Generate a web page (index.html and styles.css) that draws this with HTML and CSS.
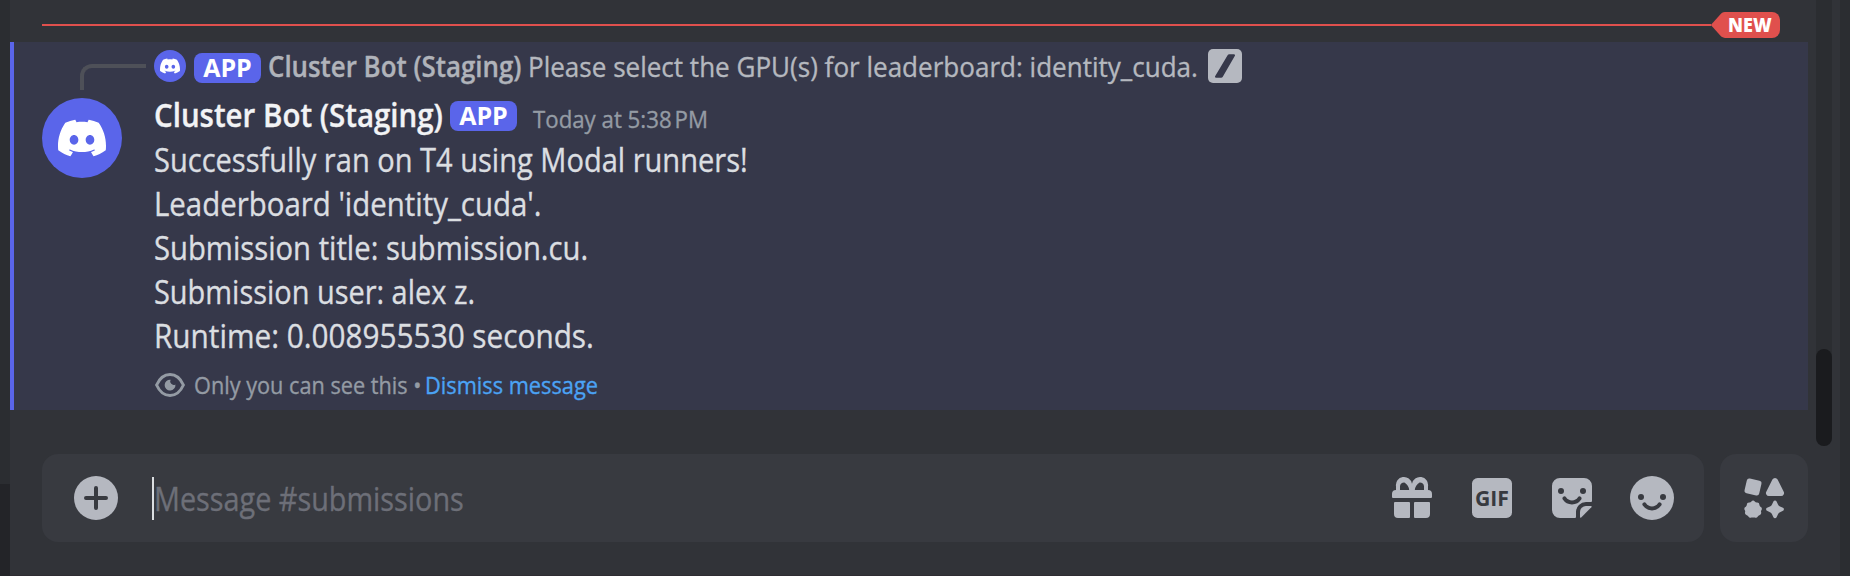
FILE: index.html
```html
<!DOCTYPE html>
<html lang="en">
<head>
<meta charset="utf-8">
<title>submissions</title>
<link rel="stylesheet" href="styles.css">
</head>
<body>
<svg class="defs" aria-hidden="true">
  <symbol id="logo" viewBox="0 0 24 24"><path d="M20.317 4.3698a19.7913 19.7913 0 00-4.8851-1.5152.0741.0741 0 00-.0785.0371c-.211.3753-.4447.8648-.6083 1.2495-1.8447-.2762-3.68-.2762-5.4868 0-.1636-.3933-.4058-.8742-.6177-1.2495a.077.077 0 00-.0785-.037 19.7363 19.7363 0 00-4.8852 1.515.0699.0699 0 00-.0321.0277C.5334 9.0458-.319 13.5799.0992 18.0578a.0824.0824 0 00.0312.0561c2.0528 1.5076 4.0413 2.4228 5.9929 3.0294a.0777.0777 0 00.0842-.0276c.4616-.6304.8731-1.2952 1.226-1.9942a.076.076 0 00-.0416-.1057c-.6528-.2476-1.2743-.5495-1.8722-.8923a.077.077 0 01-.0076-.1277c.1258-.0943.2517-.1923.3718-.2914a.0743.0743 0 01.0776-.0105c3.9278 1.7933 8.18 1.7933 12.0614 0a.0739.0739 0 01.0785.0095c.1202.099.246.1981.3728.2924a.077.077 0 01-.0066.1276 12.2986 12.2986 0 01-1.873.8914.0766.0766 0 00-.0407.1067c.3604.698.7719 1.3628 1.225 1.9932a.076.076 0 00.0842.0286c1.961-.6067 3.9495-1.5219 6.0023-3.0294a.077.077 0 00.0313-.0552c.5004-5.177-.8382-9.6739-3.5485-13.6604a.061.061 0 00-.0312-.0286zM8.02 15.3312c-1.1825 0-2.1569-1.0857-2.1569-2.419 0-1.3332.9555-2.4189 2.157-2.4189 1.2108 0 2.1757 1.0952 2.1568 2.419 0 1.3332-.9555 2.4189-2.1569 2.4189zm7.9748 0c-1.1825 0-2.1569-1.0857-2.1569-2.419 0-1.3332.9554-2.4189 2.1569-2.4189 1.2108 0 2.1757 1.0952 2.1568 2.419 0 1.3332-.946 2.4189-2.1568 2.4189Z"/></symbol>
</svg>
<div class="app">
  <div class="rail"><div class="rail-top"></div><div class="rail-user"></div></div>
  <main class="main">
    <div class="chat">
      <div class="feed">
        <div class="divider">
          <span class="divider-line"></span>
          <span class="new"><svg class="new-tip" viewBox="0 0 14 26"><path d="M14.500 0C11.500 .2 10.500 1.200 9.500 2.200L.3 12.400a1 1 0 0 0 0 1.200l9.200 10.200c1 1 2 2 5 2.200Z"/></svg><span class="new-body"><b class="new-text">NEW</b></span></span>
        </div>
        <article class="message">
          <div class="reply">
            <span class="spine"></span>
            <span class="mini-avatar"><svg class="mini-logo"><use href="#logo"/></svg></span>
            <span class="badge"><span class="badge-text">APP</span></span>
            <span class="reply-name"><span class="t">Cluster Bot (Staging)</span></span>
            <span class="reply-text"><span class="t">Please select the GPU(s) for leaderboard: identity_cuda.</span></span>
            <svg class="slash" viewBox="0 0 34 34"><rect class="fill" width="34" height="34" rx="5"/><path class="slash-mark" d="M19.600 6.200a2 2 0 0 1 1.700-1H26a1 1 0 0 1 .9 1.500L14.800 27.800a2 2 0 0 1-1.700 1H8a1 1 0 0 1-.9-1.500Z"/></svg>
          </div>
          <div class="body">
            <span class="avatar"><svg class="avatar-logo"><use href="#logo"/></svg></span>
            <div class="content">
              <header class="head">
                <span class="name"><span class="t">Cluster Bot (Staging)</span></span>
                <span class="badge"><span class="badge-text">APP</span></span>
                <time class="time"><span class="t">Today at 5:38&#8239;PM</span></time>
              </header>
              <p class="line l1"><span class="t">Successfully ran on T4 using Modal runners!</span></p>
              <p class="line l2"><span class="t">Leaderboard 'identity_cuda'.</span></p>
              <p class="line l3"><span class="t">Submission title: submission.cu.</span></p>
              <p class="line l4"><span class="t">Submission user: alex z.</span></p>
              <p class="line l5"><span class="t">Runtime: 0.008955530 seconds.</span></p>
              <footer class="note">
                <svg class="eye" viewBox="0 0 32 28"><path class="eye-outline" d="M2.600 14C5.500 7.500 10.200 3.500 16 3.500S26.500 7.500 29.400 14C26.500 20.500 21.800 24.500 16 24.500S5.500 20.500 2.600 14Z"/><path class="eye-pupil" d="M16.600 8.700a3.500 3.500 0 0 0 4.800 4.700A5.400 5.400 0 1 1 16.600 8.700Z"/></svg>
                <span class="note-text"><span class="t">Only you can see this •</span></span>
                <a class="dismiss"><span class="t">Dismiss message</span></a>
              </footer>
            </div>
          </div>
        </article>
      </div>
      <div class="track"><div class="thumb"></div></div>
    </div>
    <div class="composer">
      <div class="input">
        <svg class="plus" viewBox="0 0 44 44"><circle class="fill" cx="22" cy="22" r="22"/><path class="cut" d="M22 12v20M12 22h20"/></svg>
        <span class="caret"></span><span class="placeholder"><span class="t">Message #submissions</span></span>
        <div class="tools">
          <svg class="icon" viewBox="0 0 24 24"><path class="fill" fill-rule="evenodd" d="M4 6.200a4 4 0 0 1 8-1.300 4 4 0 0 1 8 1.300V8H4Zm2 .1V8h4.600A5 5 0 0 0 8.200 4.200 2.050 2.050 0 0 0 6 6.300ZM13.400 8H18V6.300a2.050 2.050 0 0 0-2.200-2.100A5 5 0 0 0 13.400 8ZM4 8h16a2 2 0 0 1 2 2v1.500a.5.5 0 0 1-.5.500h-19a.5.5 0 0 1-.5-.5V10a2 2 0 0 1 2-2ZM3.500 14h7a.5.5 0 0 1 .5.500V21.500a.5.5 0 0 1-.5.500H5a2 2 0 0 1-2-2V14.500a.5.5 0 0 1 .5-.5ZM13.500 14h7a.5.5 0 0 1 .5.500V20a2 2 0 0 1-2 2h-5.500a.5.5 0 0 1-.5-.5V14.500a.5.5 0 0 1 .5-.5Z"/></svg>
          <svg class="icon" viewBox="0 0 24 24"><rect class="fill" x="2" y="2" width="20" height="20" rx="2.800"/><text class="gif" x="3.500" y="15.900" textLength="17" lengthAdjust="spacingAndGlyphs">GIF</text></svg>
          <svg class="icon" viewBox="0 0 24 24"><path class="fill" d="M6 2h12a4 4 0 0 1 4 4v7.500a.5.5 0 0 1-.5.500H19a5 5 0 0 0-5 5v2.500a.5.5 0 0 1-.5.500H6a4 4 0 0 1-4-4V6a4 4 0 0 1 4-4Z"/><path class="fill" d="M16 21.500V19a3 3 0 0 1 3-3h2.500q.6.100.2.600L16.600 21.700q-.5.400-.6-.2Z"/><circle class="dot" cx="6.500" cy="8.500" r="1.500"/><circle class="dot" cx="17.500" cy="8.500" r="1.500"/><path class="cut" d="M8.200 12.200a4.600 4.600 0 0 0 7.600 0"/></svg>
          <svg class="icon" viewBox="0 0 24 24"><circle class="fill" cx="12" cy="12" r="11"/><circle class="dot" cx="6.500" cy="11.500" r="1.500"/><circle class="dot" cx="17.500" cy="11.500" r="1.500"/><path class="cut" d="M8.200 15.200a4.600 4.600 0 0 0 7.600 0"/></svg>
        </div>
      </div>
      <div class="apps">
        <svg class="icon" viewBox="0 0 24 24"><rect class="fill" x="2.750" y="2.750" width="7.500" height="7.500" rx="1.300" transform="rotate(13 6.500 6.500)"/><path class="fill" d="M16.200 2.700a1.500 1.500 0 0 1 2.600 0l3 6a1.500 1.500 0 0 1-1.300 2.300h-6a1.500 1.500 0 0 1-1.300-2.300Z"/><path class="fill" d="M5.700 13.700a1.200 1.200 0 0 1 1.700 0 1.200 1.200 0 0 0 1 .5 1.200 1.200 0 0 1 1.300 1.200 1.200 1.200 0 0 0 .5 1 1.200 1.200 0 0 1 .5 1.700 1.200 1.200 0 0 0-.1 1.100 1.200 1.200 0 0 1-.9 1.400 1.200 1.200 0 0 0-.8.600 1.200 1.200 0 0 1-1.500.6h-1.700a1.200 1.200 0 0 1-1.500-.6 1.200 1.200 0 0 0-.8-.6 1.200 1.200 0 0 1-.9-1.400 1.200 1.200 0 0 0-.1-1.100 1.200 1.200 0 0 1 .5-1.700 1.200 1.200 0 0 0 .5-1 1.200 1.200 0 0 1 1.300-1.200 1.200 1.200 0 0 0 1-.5Z"/><path class="fill" d="M16.700 13.700a.9.9 0 0 1 1.600 0l.7 1.600a2 2 0 0 0 1 1l1.500.600a.85.85 0 0 1 0 1.500l-1.500.700a2 2 0 0 0-1 1l-.7 1.500a.9.9 0 0 1-1.600 0l-.7-1.500a2 2 0 0 0-1-1l-1.500-.7a.85.85 0 0 1 0-1.500l1.500-.6a2 2 0 0 0 1-1Z"/></svg>
      </div>
    </div>
  </main>
  <div class="members"></div>
</div>
</body>
</html>
```
FILE: styles.css
```css
* { box-sizing: border-box; }
body { margin: 0; background: #313338; font-family: "Open Sans", "Noto Sans", sans-serif; font-size: 32px; color: #dbdee1; overflow: hidden; }
.defs { position: absolute; width: 0; height: 0; }
.app { display: flex; width: 1850px; height: 576px; }
.rail { width: 10px; display: flex; flex-direction: column; }
.rail-top { height: 484px; background: #2b2d31; }
.rail-user { flex: 1; background: #232428; }
.members { width: 10px; background: #2b2d31; }
.main { flex: 1; display: flex; flex-direction: column; border-bottom: 1px solid #2e2c32; }
.chat { display: flex; gap: 8px; height: 446px; }
.feed { width: 1798px; }
.track { width: 16px; background: #2b2d31; border-radius: 0 0 8px 8px; display: flex; align-items: flex-end; }
.thumb { width: 16px; height: 97px; border-radius: 8px; background: #1a1b1e; }

/* condensed text setting */
.t { display: inline-block; transform-origin: 0 50%; white-space: nowrap; -webkit-text-stroke: .35px currentColor; }

.divider { display: flex; align-items: center; height: 42px; padding: 8px 28px 0 32px; }
.divider-line { flex: 1; height: 2px; background: #e0504d; }
.new { display: flex; height: 26px; }
.new-tip { width: 14px; height: 26px; fill: #e0504d; }
.new-body { width: 55px; padding-left: 2.500px; background: #e0504d; border-radius: 0 8px 8px 0; }
.new-text { display: block; transform: scaleX(.9); transform-origin: 0 50%; color: #fff; font-size: 20px; line-height: 25px; font-weight: 800; }

.message { height: 368px; padding: 7px 0 0 28px; border-left: 4px solid #5a65ea; background: #36384a; }
.reply { display: flex; align-items: center; height: 34px; white-space: nowrap; font-size: 28px; line-height: 34px; }
.spine { align-self: flex-end; width: 66px; height: 26px; margin: 0 8px -7px 38px; border: 4px solid #4e5058; border-width: 4px 0 0 4px; border-top-left-radius: 12px; }
.mini-avatar { display: grid; place-items: center; width: 32px; height: 32px; border-radius: 50%; background: #5a65ea; }
.mini-logo { width: 20px; height: 20px; fill: #fff; }
.badge { display: flex; justify-content: center; width: 67px; height: 30px; border-radius: 8px; background: #5a65ea; color: #fff; }
.badge-text { font-size: 25px; font-weight: 700; line-height: 29px; }
.reply .badge { margin: 4px 7px 0 8px; }
.reply-name { width: 260px; color: #b0b3ba; font-weight: 600; }
.reply-name .t { transform: scaleX(.9235); }
.reply-text { width: 680px; color: #b5b8bf; }
.reply-text .t { transform: scaleX(.930); }
.slash { width: 34px; height: 34px; }
.fill { fill: #b5b8c0; }
.slash-mark { fill: #36384a; }

.body { display: flex; gap: 32px; padding-top: 9px; }
.avatar { display: grid; place-items: center; width: 80px; height: 80px; margin-top: 6px; border-radius: 50%; background: #5a65ea; }
.avatar-logo { width: 48px; height: 48px; fill: #fff; }
.head { display: flex; height: 46px; line-height: 46px; white-space: nowrap; }
.name { width: 296px; color: #f2f3f5; font-weight: 600; }
.name .t { transform: scaleX(.921); }
.head .badge { margin: 9px 16px 0 0; }
.time { font-size: 24px; line-height: 53px; color: #949ba4; }
.time .t { transform: scaleX(.927); }
.line { margin: 0; height: 44px; line-height: 44px; white-space: nowrap; }
.l1 .t { transform: scaleX(.9075); }
.l2 .t { transform: scaleX(.919); }
.l3 .t { transform: scaleX(.9135); }
.l4 .t { transform: scaleX(.904); }
.l5 .t { transform: scaleX(.9296); }
.note { display: flex; align-items: center; height: 48px; padding-top: 5px; font-size: 24px; color: #949ba4; white-space: nowrap; }
.eye { width: 32px; height: 28px; margin-right: 8px; }
.eye-outline { fill: none; stroke: #949ba4; stroke-width: 3; }
.eye-pupil { fill: #949ba4; }
.note-text { width: 231px; }
.note-text .t { transform: scaleX(.904); }
.dismiss { color: #4ba3f5; }
.dismiss .t { transform: scaleX(.907); }

.composer { display: flex; gap: 16px; padding: 8px 32px 0; }
.input { display: flex; align-items: center; flex: 1; height: 88px; padding: 0 28px 0 32px; border-radius: 16px; background: #383a40; }
.plus { width: 44px; height: 44px; }
.plus .cut { stroke-width: 4; }
.caret { width: 2px; height: 43px; margin-left: 34px; background: #dbdee1; }
.placeholder { width: 400px; color: #6d6f78; }
.placeholder .t { transform: scaleX(.9); }
.tools { display: flex; gap: 32px; margin-left: auto; }
.icon { width: 48px; height: 48px; }
.cut { fill: none; stroke: #383a40; stroke-width: 2; stroke-linecap: round; }
.dot { fill: #383a40; }
.gif { fill: #383a40; font-size: 10.800px; font-weight: 700; }
.apps { display: grid; place-items: center; width: 88px; height: 88px; border-radius: 16px; background: #383a40; }
```
